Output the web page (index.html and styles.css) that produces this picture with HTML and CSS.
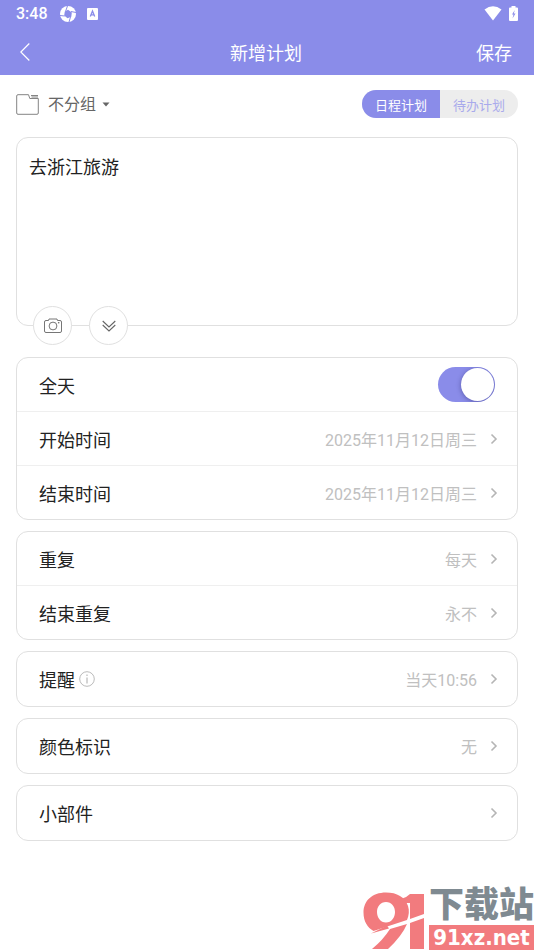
FILE: index.html
```html
<!DOCTYPE html>
<html lang="zh-CN">
<head>
<meta charset="utf-8">
<meta name="viewport" content="width=device-width, initial-scale=1">
<title>新增计划</title>
<link rel="stylesheet" href="styles.css">
</head>
<body>
<svg class="defs" aria-hidden="true">
  <symbol id="chevron" viewBox="0 0 8 12"><path d="M1.5 1.5 6 6l-4.500 4.500" fill="none" stroke="currentColor" stroke-width="1.600"/></symbol>
</svg>
<header class="header">
  <div class="status">
    <span class="clock">3:48</span>
    <svg class="status-ring" viewBox="0 0 16 16" aria-hidden="true">
      <circle cx="8" cy="8" r="8" fill="#fff"/>
      <path d="M8 3.800 11.800 6.500 11.300 10.800 7.500 12.300 4.200 9.500 4.800 5.500z" fill="#8a8ce9"/>
      <path d="M5.500 5.500 7.500 0M11 5.500l5 1M10.500 11 9 16M4.800 10 0 9.500" stroke="#8a8ce9" stroke-width="1"/>
    </svg>
    <svg class="status-app" viewBox="0 0 11 12" aria-hidden="true">
      <rect width="11" height="12" rx="1" fill="#fff"/>
      <path d="M3.300 8.500 5.500 3l2.200 5.500M4.200 6.800h2.600" fill="none" stroke="#8a8ce9" stroke-width="1.300"/>
    </svg>
    <svg class="status-wifi" viewBox="0 0 18 15" aria-hidden="true"><path d="M.5 3.500Q9-3 17.500 3.500L9 14.500z" fill="#fff"/></svg>
    <svg class="status-battery" viewBox="0 0 9 15" aria-hidden="true">
      <path d="M2.500 0h4v1.500H8a1 1 0 0 1 1 1V14a1 1 0 0 1-1 1H1a1 1 0 0 1-1-1V2.500a1 1 0 0 1 1-1h1.500z" fill="#fff"/>
      <path d="M5.800 4 3 8.500h1.500L3.500 12.500 6.500 7.500H4.800z" fill="#8a8ce9"/>
    </svg>
  </div>
  <div class="nav">
    <button class="back" type="button" aria-label="返回">
      <svg viewBox="0 0 10 18" aria-hidden="true"><path d="M9.300.5.800 9l8.500 8.500" fill="none" stroke="#fff" stroke-width="1.200"/></svg>
    </button>
    <h1 class="title">新增计划</h1>
    <button class="save" type="button">保存</button>
  </div>
</header>
<main class="content">
  <div class="toolbar">
    <label class="group">
      <svg class="folder" viewBox="0 0 24 21" aria-hidden="true">
        <path d="M12.500.7H2Q.7.700.7 2v17Q.7 20.300 2 20.300h19q1.300 0 1.300-1.300V4.500h-8.500zM15 1.500h7M15.500 3h6.500" fill="none" stroke="#777" stroke-width=".9"/>
      </svg>
      <select class="group-select" aria-label="分组"><option>不分组</option></select>
      <svg class="caret" viewBox="0 0 8 5" aria-hidden="true"><path d="M.5.500h7L4 4.500z" fill="#666"/></svg>
    </label>
    <div class="segments">
      <label class="segment"><input type="radio" name="kind" checked><span>日程计划</span></label>
      <label class="segment"><input type="radio" name="kind"><span>待办计划</span></label>
    </div>
  </div>
  <div class="note">
    <textarea class="note-text" aria-label="计划内容">去浙江旅游</textarea>
    <div class="note-tools">
      <button class="round" type="button" aria-label="添加照片">
        <svg class="camera" viewBox="0 0 18 15" aria-hidden="true">
          <g fill="none" stroke="#666" stroke-width=".9"><path d="M4.500 2.500 5 1h8l.5 1.500H16q1.500 0 1.500 1.500v9q0 1.500-1.500 1.500H2Q.5 14.500.5 13V4Q.5 2.500 2 2.500z"/><circle cx="9" cy="8" r="3.900"/></g>
          <circle cx="14.700" cy="4.800" r=".8" fill="#666"/>
        </svg>
      </button>
      <button class="round" type="button" aria-label="展开">
        <svg class="expand" viewBox="0 0 14 12" aria-hidden="true"><path d="m.7 1 6.300 6 6.300-6M.7 5 7 11l6.300-6" fill="none" stroke="#666" stroke-width="1.100"/></svg>
      </button>
    </div>
  </div>
  <section class="card">
    <label class="row"><span class="name">全天</span><input class="switch" type="checkbox" checked></label>
    <button class="row" type="button"><span class="name">开始时间</span><span class="value">2025年11月12日周三</span><svg class="chevron"><use href="#chevron"/></svg></button>
    <button class="row" type="button"><span class="name">结束时间</span><span class="value">2025年11月12日周三</span><svg class="chevron"><use href="#chevron"/></svg></button>
  </section>
  <section class="card">
    <button class="row" type="button"><span class="name">重复</span><span class="value">每天</span><svg class="chevron"><use href="#chevron"/></svg></button>
    <button class="row" type="button"><span class="name">结束重复</span><span class="value">永不</span><svg class="chevron"><use href="#chevron"/></svg></button>
  </section>
  <section class="card card-single">
    <button class="row" type="button"><span class="name">提醒</span><svg class="info" viewBox="0 0 16 16" aria-hidden="true"><circle cx="8" cy="8" r="7.300" fill="none" stroke="#bbb"/><path d="M8 6.500v6M8 3.500V5" stroke="#aaa"/></svg><span class="value">当天10:56</span><svg class="chevron"><use href="#chevron"/></svg></button>
  </section>
  <section class="card card-single">
    <button class="row" type="button"><span class="name">颜色标识</span><span class="value">无</span><svg class="chevron"><use href="#chevron"/></svg></button>
  </section>
  <section class="card card-single">
    <button class="row" type="button"><span class="name">小部件</span><span class="value"></span><svg class="chevron"><use href="#chevron"/></svg></button>
  </section>
</main>
<aside class="watermark">
  <svg class="mark" viewBox="0 0 64 60" aria-hidden="true">
    <path fill="#f27b7e" fill-rule="evenodd" d="M23 2.500C9 2.500.5 11 .5 22.500c0 9 4 15 10 18.500L44 30c2-5 2.500-9 1-14C42 7 34 2.500 23 2.500zM23 12c5.500 0 9 4.500 9 10s-3.500 10.500-9 10.500-9-5-9-10.500 3.500-10 9-10z"/>
    <path fill="#f27b7e" d="M38 9q5-1 9-5h14v20l-14 5V13h-7zM47 33l14-5v31H47zM27 39l17-5q-5 12-19 25H9q11-9 18-20z"/>
    <path fill="#f27b7e" d="M8 43.500 24 35.500l2 3z"/>
  </svg>
  <div class="site"><span class="site-name">下载站</span><span class="site-url">91xz.net</span></div>
</aside>
</body>
</html>
```
FILE: styles.css
```css
* {
  box-sizing: border-box;
}

body {
  margin: 0;
  min-height: 100vh;
  position: relative;
  background: #fff;
  color: #222;
  font-family: Roboto, "Noto Sans CJK SC", sans-serif;
  font-size: 18px;
}

button, select, textarea {
  margin: 0;
  padding: 0;
  border: 0;
  background: none;
  color: inherit;
  font: inherit;
}

svg {
  display: block;
  flex: none;
}

.defs {
  position: absolute;
  width: 0;
  height: 0;
}

.header {
  background: #8a8ce9;
  color: #fff;
}

.status {
  display: flex;
  align-items: center;
  height: 27px;
  padding: 0 16px;
}

.clock {
  font-size: 16px;
  font-weight: 500;
}

.status-ring {
  width: 16px;
  height: 16px;
  margin-left: 12px;
}

.status-app {
  width: 11px;
  height: 12px;
  margin-left: 11px;
}

.status-wifi {
  width: 18px;
  height: 15px;
  margin-left: auto;
}

.status-battery {
  width: 9px;
  height: 15px;
  margin-left: 7px;
}

.nav {
  display: grid;
  grid-template-columns: 1fr auto 1fr;
  align-items: center;
  height: 48px;
  padding: 1px 22px 0 20px;
}

.back svg {
  width: 10px;
  height: 18px;
}

.title {
  margin: 0;
  font-size: 18px;
  font-weight: 400;
}

.save {
  justify-self: end;
}

.content {
  display: flex;
  flex-direction: column;
  gap: 11px;
  padding: 15px 16px 32px;
}

.toolbar {
  display: flex;
  align-items: center;
  justify-content: space-between;
  height: 28px;
  margin-bottom: 8px;
}

.group {
  display: flex;
  align-items: center;
  color: #666;
  font-size: 16px;
}

.folder {
  width: 24px;
  height: 21px;
}

.group-select {
  appearance: none;
  margin-left: 8px;
}

.caret {
  width: 8px;
  height: 5px;
  margin-left: 5px;
}

.segments {
  display: flex;
  height: 28px;
  overflow: hidden;
  border-radius: 14px;
  background: #ededed;
}

.segment input {
  position: absolute;
  opacity: 0;
}

.segment span {
  display: flex;
  align-items: center;
  height: 100%;
  padding: 0 13px;
  color: #a9aaec;
  font-size: 13px;
}

.segment input:checked + span {
  background: #8a8ce9;
  color: #fff;
}

.note {
  position: relative;
  margin-bottom: 20px;
  border: 1px solid #e0e0e0;
  border-radius: 12px;
}

.note-text {
  display: block;
  width: 100%;
  height: 187px;
  padding: 15px 12px;
  outline: 0;
  resize: none;
}

.note-tools {
  position: absolute;
  left: 16px;
  bottom: -20px;
  display: flex;
  gap: 17px;
}

.round {
  display: flex;
  align-items: center;
  justify-content: center;
  width: 39px;
  height: 39px;
  border: 1px solid #e0e0e0;
  border-radius: 50%;
  background: #fff;
}

.camera {
  width: 18px;
  height: 15px;
}

.expand {
  width: 14px;
  height: 12px;
}

.card {
  border: 1px solid #e0e0e0;
  border-radius: 12px;
}

.row {
  display: flex;
  align-items: center;
  width: 100%;
  height: 53px;
  padding: 0 19px 0 22px;
  text-align: left;
}

.row + .row {
  height: 54px;
  border-top: 1px solid #efefef;
}

.card-single .row {
  height: 54px;
}

.value {
  margin-left: auto;
  color: #c0c0c0;
  font-size: 16px;
}

.chevron {
  width: 8px;
  height: 12px;
  margin-left: 13px;
  color: #b5b5b5;
}

.info {
  width: 16px;
  height: 16px;
  margin-left: 4px;
}

.switch {
  appearance: none;
  display: flex;
  width: 57px;
  height: 35px;
  margin: 0 3px 0 auto;
  padding: 1px;
  overflow: hidden;
  border-radius: 18px;
  background: #ddd;
}

.switch::before {
  content: "";
  width: 33px;
  height: 33px;
  border-radius: 50%;
  background: #fff;
  box-shadow: 0 1px 5px rgba(0, 0, 60, 0.35);
}

.switch:checked {
  justify-content: flex-end;
  background: #8a8ce9;
}

.watermark {
  position: absolute;
  right: 0;
  bottom: 0;
  display: flex;
  align-items: flex-end;
  gap: 2px;
}

.mark {
  width: 64px;
  height: 60px;
}

.site {
  display: flex;
  flex-direction: column;
}

.site-name {
  color: #7f8a91;
  font-size: 35px;
  font-weight: 900;
  line-height: 38px;
}

.site-url {
  background: #f27b7e;
  color: #fff;
  font-family: "DejaVu Sans Condensed", "DejaVu Sans", sans-serif;
  font-size: 22px;
  font-weight: 700;
  line-height: 25px;
  text-align: center;
}
```
